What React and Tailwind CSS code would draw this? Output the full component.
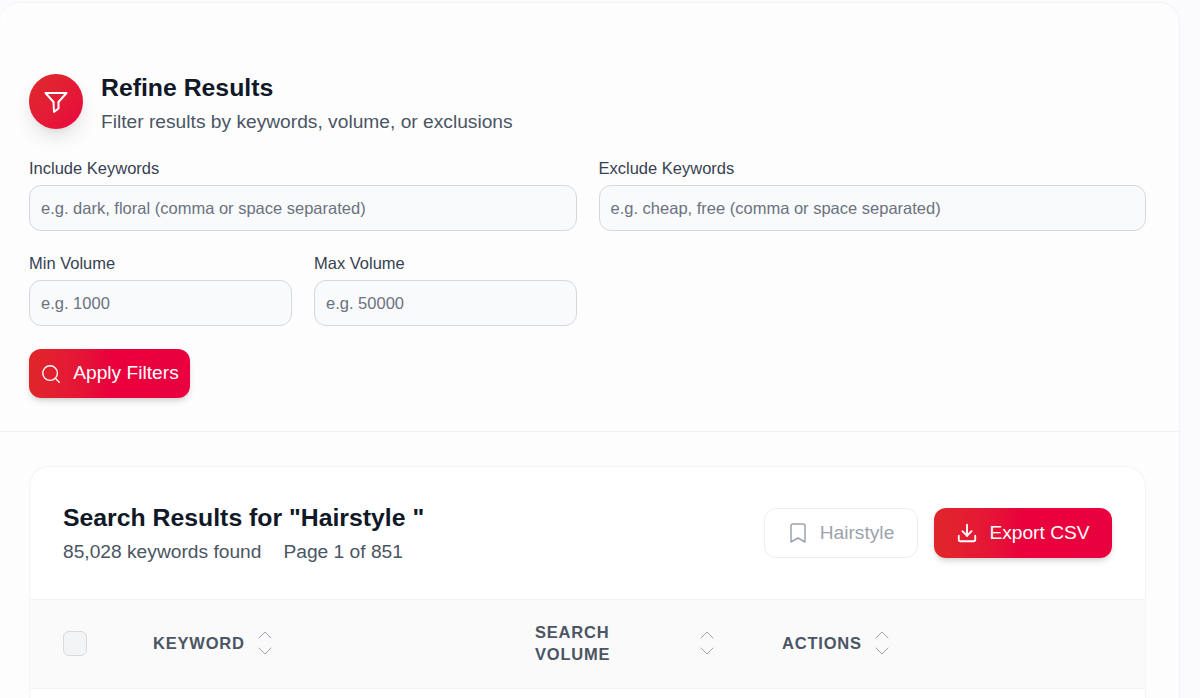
import { Search, Bookmark, Download, ChevronUp, ChevronDown } from "lucide-react";

function Field({ label, placeholder }) {
  return (
    <label className="flex flex-col gap-[5px] min-w-0">
      <span className="text-[16.5px] leading-[24px] text-[#374151]">{label}</span>
      <input
        placeholder={placeholder}
        className="h-[46px] w-full rounded-xl border-[1.5px] border-[#d5d8dd] bg-[#f9fafb] px-[11px] text-[16.5px] text-[#374151] placeholder:text-[#6b7280] outline-none"
      />
    </label>
  );
}

function Sort() {
  return (
    <span className="flex flex-col items-center text-[#9ca3af]">
      <ChevronUp className="w-6 h-6 -mb-1" strokeWidth={1} />
      <ChevronDown className="w-6 h-6 -mt-1" strokeWidth={1} />
    </span>
  );
}

export default function App() {
  return (
    <div className="h-[698px] w-[1200px] overflow-hidden bg-[#fbfbfe] pt-[2px] font-['Liberation_Sans',Arial,sans-serif]">
      <div className="w-[1180px] rounded-t-[20px] border-t border-r border-[#f3f2f6] bg-[#fdfdfe]">
        <section className="px-[29px] pt-[69px] pb-[33px] border-b border-[#f3f0f3]">
          <div className="flex items-start gap-[18px]">
            <div className="mt-[2px] flex h-[55px] w-[54px] shrink-0 items-center justify-center rounded-full bg-linear-to-br from-[#dd2a2a] to-[#ea003f] shadow-[0_10px_20px_-3px_rgba(0,0,0,0.12),0_4px_6px_-4px_rgba(0,0,0,0.1)]">
              <svg viewBox="0 0 28 28" className="h-7 w-7" fill="none" stroke="white" strokeWidth="2" strokeLinejoin="round" strokeLinecap="round">
                <path d="M3.5 5H24.5L16.5 14V20.5L12 24L11.5 14Z" />
              </svg>
            </div>
            <div className="flex flex-col">
              <h2 className="text-[24.8px] leading-[32px] font-bold text-[#111827]">Refine Results</h2>
              <p className="mt-[4px] text-[19.2px] leading-[28px] text-[#4b5563]">Filter results by keywords, volume, or exclusions</p>
            </div>
          </div>
          <div className="mt-[20px] grid grid-cols-2 gap-x-[22px] w-[1117px]">
            <Field label="Include Keywords" placeholder="e.g. dark, floral (comma or space separated)" />
            <Field label="Exclude Keywords" placeholder="e.g. cheap, free (comma or space separated)" />
          </div>
          <div className="mt-[20px] grid grid-cols-2 gap-x-[22px] w-[548px]">
            <Field label="Min Volume" placeholder="e.g. 1000" />
            <Field label="Max Volume" placeholder="e.g. 50000" />
          </div>
          <button className="mt-[23px] flex h-[49px] w-[161px] items-center justify-center gap-[11px] rounded-xl bg-linear-to-r from-[#e0262a] via-[#e9003c] to-[#ea003f] text-[19.2px] text-white shadow-[0_4px_6px_-1px_rgba(0,0,0,0.15),0_2px_4px_-2px_rgba(0,0,0,0.1)]">
            <Search className="h-[22px] w-[22px]" strokeWidth={1.5} />
            <span>Apply Filters</span>
          </button>
        </section>
        <section className="px-[29px] pt-[34px]">
          <div className="w-[1117px] rounded-t-[20px] border-t border-x border-[#f3f4f6] bg-white">
            <div className="flex items-center justify-between px-[33px] pt-[36px] pb-[33px]">
              <div>
                <h3 className="text-[24.8px] leading-[30px] font-bold text-[#111827]">Search Results for "Hairstyle "</h3>
                <p className="mt-[5px] flex gap-[22px] text-[19.2px] leading-[28px] text-[#4b5563]">
                  <span>85,028 keywords found</span>
                  <span>Page 1 of 851</span>
                </p>
              </div>
              <div className="-mt-[3px] flex gap-4">
                <button className="flex h-[50px] w-[154px] items-center justify-center gap-[10px] rounded-xl border-[1.5px] border-[#eceef2] bg-white pr-[2px] text-[19.2px] text-[#9ca3af]">
                  <Bookmark className="h-6 w-6" strokeWidth={1.5} />
                  <span>Hairstyle</span>
                </button>
                <button className="flex h-[50px] w-[178px] items-center justify-center gap-[11px] rounded-xl bg-linear-to-r from-[#e0262a] via-[#e9003c] to-[#ea003f] text-[19.2px] text-white shadow-[0_4px_6px_-1px_rgba(0,0,0,0.15),0_2px_4px_-2px_rgba(0,0,0,0.1)]">
                  <Download className="h-[22px] w-[22px]" strokeWidth={2} />
                  <span>Export CSV</span>
                </button>
              </div>
            </div>
            <div className="grid h-[90px] grid-cols-[90px_382px_247px_1fr] items-center border-y border-[#f3f4f6] bg-[#fafafb] pb-[2px] pl-[33px] text-[16.5px] font-bold leading-[22px] tracking-[0.8px] text-[#4b5563]">
              <span className="h-[25px] w-[24px] rounded-md border-[1.5px] border-[#d8dbe0] bg-[#f3f4f6]" />
              <div className="flex items-center gap-2">
                <span>KEYWORD</span>
                <Sort />
              </div>
              <div className="flex items-center">
                <span className="w-[160px] pr-[60px]">SEARCH VOLUME</span>
                <Sort />
              </div>
              <div className="flex items-center gap-2">
                <span>ACTIONS</span>
                <Sort />
              </div>
            </div>
            <div className="h-10" />
          </div>
        </section>
      </div>
    </div>
  );
}
